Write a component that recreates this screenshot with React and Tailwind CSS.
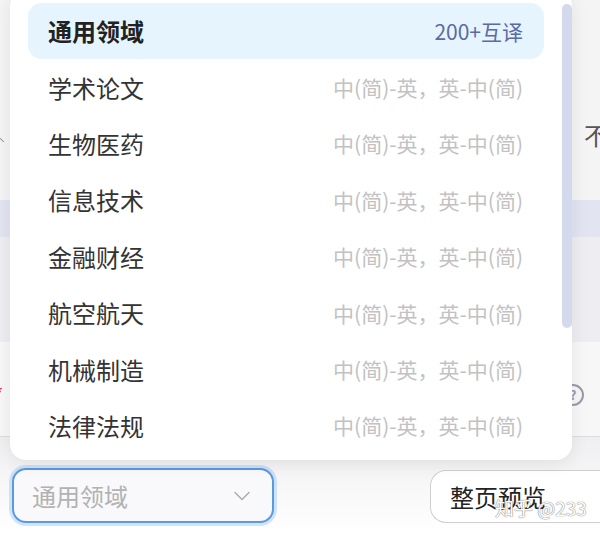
import { ChevronDown, ChevronUp } from 'lucide-react';

const domains = [
  { name: '通用领域', desc: '200+互译', active: true },
  { name: '学术论文', desc: '中(简)-英，英-中(简)' },
  { name: '生物医药', desc: '中(简)-英，英-中(简)' },
  { name: '信息技术', desc: '中(简)-英，英-中(简)' },
  { name: '金融财经', desc: '中(简)-英，英-中(简)' },
  { name: '航空航天', desc: '中(简)-英，英-中(简)' },
  { name: '机械制造', desc: '中(简)-英，英-中(简)' },
  { name: '法律法规', desc: '中(简)-英，英-中(简)' },
];

const font = { fontFamily: '"Noto Sans CJK SC", "Noto Sans", sans-serif' };

const DomainMenu = () => (
  <div className="absolute left-[10px] top-[-10px] w-[562px] h-[470px] rounded-[16px] bg-white shadow-[0_4px_18px_rgba(0,0,0,0.08)] pt-[13px] pl-[18px] pr-[28px]">
    {/* Rows */}
    <div className="flex flex-col">
      {domains.map((d) => (
        <div
          key={d.name}
          className={`h-[56.4px] flex items-center justify-between pl-[20px] pr-[21px] rounded-[14px] ${d.active ? 'bg-[#e6f4fd]' : ''}`}
        >
          <span className={`text-[24px] leading-none ${d.active ? 'font-bold text-[#222]' : 'text-[#333]'}`}>{d.name}</span>
          <span className={`text-[21px] leading-none ${d.active ? 'text-[#5b6aa3]' : 'text-[#c2c2c2]'}`}>{d.desc}</span>
        </div>
      ))}
    </div>
    {/* Scrollbar thumb */}
    <div className="absolute right-0 top-[14px] w-[10px] h-[324px] rounded-full bg-[#d4daed]" />
  </div>
);

export default function App() {
  return (
    <div className="relative w-[600px] h-[533px] overflow-hidden bg-white" style={font}>
      {/* Page behind the menu */}
      <div className="flex flex-col">
        <div className="h-[200px] bg-[#f4f4f5] flex items-center justify-between">
          <ChevronUp size={14} strokeWidth={1.5} className="ml-[-7px] mt-[80px] text-[#666]" />
          <span className="text-[24px] text-[#555] mr-[-8px] mt-[70px]">：不</span>
        </div>
        <div className="h-[37px] bg-[#e2e5f1]" />
        <div className="h-[105px] bg-[#eeeef2]" />
        <div className="h-[95px] bg-[#f7f7f8] flex items-center justify-between border-b border-[#dcdcdc]">
          <span className="text-[20px] text-[#e04040] ml-[-6px] mt-[10px]">*</span>
          <span className="w-[22px] h-[22px] rounded-full border-2 border-[#9a9aa8] mr-[16px] mt-[12px] flex items-center justify-center text-[13px] text-[#9a9aa8] font-bold">?</span>
        </div>
        <div className="h-[96px] bg-gradient-to-b from-[#efeff1] to-white flex items-start justify-between pt-[31px] pl-[12px]">
          <div className="w-[262px] h-[55px] rounded-[14px] border-2 border-[#5a9ae0] shadow-[0_0_0_3px_rgba(150,200,245,0.45)] bg-[#f9f9fb] flex items-center justify-between pl-[18px] pr-[16px]">
            <span className="text-[24px] text-[#b2b2b2]">通用领域</span>
            <ChevronDown size={28} strokeWidth={1.1} className="text-[#a8a8a8]" />
          </div>
          <div className="mt-[2px] w-[200px] h-[53px] rounded-l-[16px] border border-r-0 border-[#cfcfcf] bg-white flex items-center pl-[19px] mr-[-30px]">
            <span className="text-[24px] text-[#222]">整页预览</span>
          </div>
        </div>
      </div>

      <DomainMenu />

      {/* Watermark */}
      <span className="absolute left-[495px] top-[494px] text-[19px] text-white [text-shadow:0_0_1px_#777,0_0_1px_#777]">知乎 @233</span>
    </div>
  );
}
